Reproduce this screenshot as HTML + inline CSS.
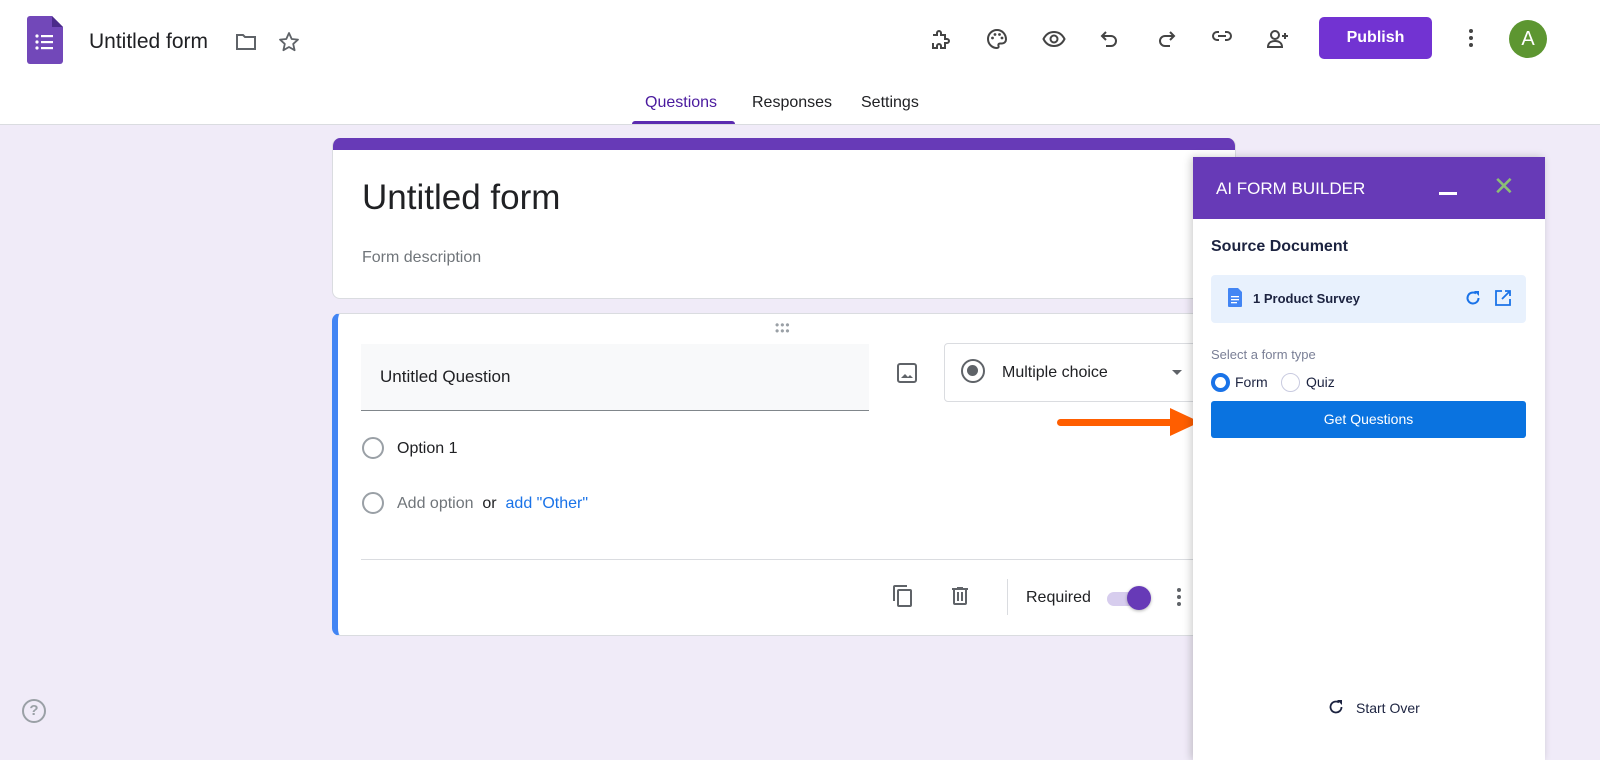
<!DOCTYPE html>
<html><head><meta charset="utf-8"><style>
*{box-sizing:border-box;margin:0;padding:0}
body{width:1600px;height:760px;overflow:hidden;background:#f0ebf8;font-family:"Liberation Sans",Arial,sans-serif;position:relative;color:#202124}
.abs{position:absolute}
.top{left:0;top:0;width:1600px;height:125px;background:#fff;border-bottom:1px solid #dadce0}
.ic{position:absolute;width:24px;height:24px}
.card{background:#fff;border-radius:8px;border:1px solid #dadce0;position:absolute}
.radio{position:absolute;width:22px;height:22px;border:2px solid #9aa0a6;border-radius:50%}
</style></head><body>
<div class="abs top">
 <svg class="abs" style="left:27px;top:16px" width="36" height="48" viewBox="0 0 36 48"><path d="M3 0h22l11 11v34a3 3 0 0 1-3 3H3a3 3 0 0 1-3-3V3a3 3 0 0 1 3-3z" fill="#7248b9"/><path d="M25 0l11 11H25z" fill="#4b2b8a"/><g fill="#fff"><circle cx="10" cy="20" r="1.6"/><circle cx="10" cy="26" r="1.6"/><circle cx="10" cy="32" r="1.6"/><rect x="14" y="19" width="12" height="2.2"/><rect x="14" y="25" width="12" height="2.2"/><rect x="14" y="31" width="12" height="2.2"/></g></svg>
 <div class="abs" style="left:89px;top:30px;font-size:21px">Untitled form</div>
 <svg class="ic" style="left:234px;top:30px" viewBox="0 0 24 24"><path d="M3 5h6l2 2h10v12H3z" fill="none" stroke="#5f6368" stroke-width="2"/></svg>
 <svg class="ic" style="left:277px;top:30px" viewBox="0 0 24 24"><path d="M12 3l2.7 6 6.3.6-4.8 4.3 1.4 6.3L12 17l-5.6 3.2 1.4-6.3L3 9.6 9.3 9z" fill="none" stroke="#5f6368" stroke-width="1.8" stroke-linejoin="round"/></svg>
 <svg class="ic" style="left:929px;top:27px" viewBox="0 0 24 24"><path d="M4 8h4V6a2 2 0 0 1 4 0v2h4v4h2a2 2 0 0 1 0 4h-2v5h-4v-2a2 2 0 0 0-4 0v2H4v-5" fill="none" stroke="#444" stroke-width="2"/></svg>
 <svg class="ic" style="left:985px;top:27px" viewBox="0 0 24 24"><path d="M12 3a9 9 0 0 0 0 18c1.5 0 2-1 1.5-2s0-2.5 1.5-2.5H17a4 4 0 0 0 4-4C21 7 17 3 12 3z" fill="none" stroke="#444" stroke-width="2"/><circle cx="7.5" cy="11" r="1.4" fill="#444"/><circle cx="10" cy="7.5" r="1.4" fill="#444"/><circle cx="14.5" cy="7.5" r="1.4" fill="#444"/><circle cx="17" cy="11" r="1.4" fill="#444"/></svg>
 <svg class="ic" style="left:1042px;top:27px" viewBox="0 0 24 24"><path d="M1.5 12C4 7 8 5 12 5s8 2 10.5 7C20 17 16 19 12 19s-8-2-10.5-7z" fill="none" stroke="#444" stroke-width="2"/><circle cx="12" cy="12" r="3.5" fill="none" stroke="#444" stroke-width="2"/></svg>
 <svg class="ic" style="left:1098px;top:27px" viewBox="0 0 24 24"><path d="M8 5L4 9l4 4M4 9h9a5 5 0 0 1 0 10H8" fill="none" stroke="#444" stroke-width="2"/></svg>
 <svg class="ic" style="left:1154px;top:27px" viewBox="0 0 24 24"><path d="M16 5l4 4-4 4M20 9h-9a5 5 0 0 0 0 10h5" fill="none" stroke="#444" stroke-width="2"/></svg>
 <svg class="ic" style="left:1210px;top:24px" viewBox="0 0 24 24"><path d="M9 8H7a4 4 0 0 0 0 8h2M15 8h2a4 4 0 0 1 0 8h-2M8 12h8" fill="none" stroke="#444" stroke-width="2"/></svg>
 <svg class="ic" style="left:1266px;top:27px" viewBox="0 0 24 24"><circle cx="9" cy="8" r="4" fill="none" stroke="#444" stroke-width="2"/><path d="M2 20c0-4 3-6 7-6s7 2 7 6z" fill="none" stroke="#444" stroke-width="2"/><path d="M19 6v6M16 9h6" stroke="#444" stroke-width="2"/></svg>
 <div class="abs" style="left:1319px;top:17px;width:113px;height:42px;background:#7233d2;border-radius:5px;color:#fff;font-weight:bold;font-size:16px;text-align:center;line-height:42px">Publish</div>
 <svg class="ic" style="left:1459px;top:26px" viewBox="0 0 24 24"><g fill="#444"><circle cx="12" cy="5" r="2"/><circle cx="12" cy="12" r="2"/><circle cx="12" cy="19" r="2"/></g></svg>
 <div class="abs" style="left:1509px;top:20px;width:38px;height:38px;border-radius:50%;background:#5d9631;color:#fff;font-size:20px;text-align:center;line-height:38px">A</div>
 <div class="abs" style="left:645px;top:94px;font-size:16px;color:#4a1a9e">Questions</div>
 <div class="abs" style="left:632px;top:121px;width:103px;height:3px;background:#5b2bb0;border-radius:3px 3px 0 0"></div>
 <div class="abs" style="left:752px;top:94px;font-size:16px">Responses</div>
 <div class="abs" style="left:861px;top:94px;font-size:16px">Settings</div>
</div>
<div class="card" style="left:332px;top:138px;width:904px;height:161px;border-top:none;overflow:hidden">
 <div style="height:12px;background:#673ab7"></div>
 <div class="abs" style="left:29px;top:40px;font-size:35px">Untitled form</div>
 <div class="abs" style="left:29px;top:111px;font-size:16px;color:#70757a">Form description</div>
</div>
<div class="card" style="left:332px;top:313px;width:904px;height:323px;border-left:6px solid #4285f4;overflow:hidden">
 <div class="abs" style="left:437px;top:8px;color:#9aa0a6;font-size:12px;letter-spacing:1px;line-height:6px">•••<br>•••</div>
 <div class="abs" style="left:23px;top:30px;width:508px;height:67px;background:#f8f9fa;border-bottom:1px solid #80868b"></div>
 <div class="abs" style="left:42px;top:53px;font-size:17px">Untitled Question</div>
 <svg class="ic" style="left:557px;top:47px" viewBox="0 0 24 24"><rect x="3" y="3" width="18" height="18" rx="2" fill="none" stroke="#5f6368" stroke-width="2"/><path d="M6 17l4-4 3 3 2-2 3 3z" fill="#5f6368"/></svg>
 <div class="abs" style="left:606px;top:29px;width:300px;height:59px;border:1px solid #dadce0;border-radius:4px"></div>
 <div class="abs" style="left:623px;top:45px;width:24px;height:24px;border:2.5px solid #5f6368;border-radius:50%"><div style="margin:4px;width:11px;height:11px;border-radius:50%;background:#5f6368"></div></div>
 <div class="abs" style="left:664px;top:50px;font-size:16px">Multiple choice</div>
 <div class="abs" style="left:834px;top:56px;border:5px solid transparent;border-top-color:#5f6368"></div>
 <div class="radio" style="left:24px;top:123px"></div>
 <div class="abs" style="left:59px;top:126px;font-size:16px">Option 1</div>
 <div class="radio" style="left:24px;top:178px"></div>
 <div class="abs" style="left:59px;top:181px;font-size:16px;color:#70757a">Add option <span style="color:#202124">&nbsp;or&nbsp;</span> <span style="color:#1a73e8">add "Other"</span></div>
 <div class="abs" style="left:23px;top:245px;width:880px;height:1px;background:#dadce0"></div>
 <svg class="ic" style="left:553px;top:270px" viewBox="0 0 24 24"><path d="M16 1H4a2 2 0 0 0-2 2v14h2V3h12zm3 4H8a2 2 0 0 0-2 2v14a2 2 0 0 0 2 2h11a2 2 0 0 0 2-2V7a2 2 0 0 0-2-2zm0 16H8V7h11z" fill="#5f6368"/></svg>
 <svg class="ic" style="left:610px;top:270px" viewBox="0 0 24 24"><path d="M15 4V3H9v1H4v2h1v13a2 2 0 0 0 2 2h10a2 2 0 0 0 2-2V6h1V4zm2 15H7V6h10zM9 8h2v9H9zm4 0h2v9h-2z" fill="#5f6368"/></svg>
 <div class="abs" style="left:669px;top:265px;width:1px;height:36px;background:#dadce0"></div>
 <div class="abs" style="left:688px;top:275px;font-size:16px">Required</div>
 <div class="abs" style="left:769px;top:278px;width:36px;height:14px;border-radius:7px;background:#d7cdee"></div>
 <div class="abs" style="left:789px;top:272px;width:24px;height:24px;border-radius:50%;background:#673ab7;box-shadow:0 1px 3px rgba(0,0,0,.3)"></div>
 <svg class="ic" style="left:829px;top:271px" viewBox="0 0 24 24"><g fill="#5f6368"><circle cx="12" cy="5" r="2"/><circle cx="12" cy="12" r="2"/><circle cx="12" cy="19" r="2"/></g></svg>
</div>
<div class="abs" style="left:1057px;top:419px;width:118px;height:7px;background:#ff5e00;border-radius:4px"></div>
<div class="abs" style="left:1170px;top:408px;border-left:30px solid #ff5e00;border-top:14px solid transparent;border-bottom:14px solid transparent"></div>
<div class="abs" style="left:22px;top:699px;width:24px;height:24px;border:2px solid #9aa0a6;border-radius:50%;color:#9aa0a6;font-size:15px;text-align:center;line-height:20px;font-weight:bold">?</div>
<div class="abs" style="left:1193px;top:157px;width:352px;height:603px;background:#fff;box-shadow:-2px 0 8px rgba(0,0,0,.2)">
 <div style="height:62px;background:#673ab7;position:relative">
  <div class="abs" style="left:23px;top:22px;color:#fff;font-size:17px">AI FORM BUILDER</div>
  <div class="abs" style="left:246px;top:35px;width:18px;height:2.5px;background:#fff"></div>
  <div class="abs" style="left:300px;top:14px;color:#8cbf75;font-size:26px">✕</div>
 </div>
 <div class="abs" style="left:18px;top:81px;font-size:16px;font-weight:bold;color:#1c2340">Source Document</div>
 <div class="abs" style="left:18px;top:118px;width:315px;height:48px;background:#e8f1fd;border-radius:4px">
  <svg class="abs" style="left:17px;top:13px" width="14" height="19" viewBox="0 0 14 19"><path d="M1 0h9l4 4v14a1 1 0 0 1-1 1H1a1 1 0 0 1-1-1V1a1 1 0 0 1 1-1z" fill="#4285f4"/><g fill="#fff"><rect x="3" y="8" width="8" height="1.3"/><rect x="3" y="11" width="8" height="1.3"/><rect x="3" y="14" width="6" height="1.3"/></g></svg>
  <div class="abs" style="left:42px;top:16px;font-size:13px;font-weight:bold;color:#1c2340">1 Product Survey</div>
  <svg class="abs" style="left:253px;top:14px" width="18" height="18" viewBox="0 0 18 18"><path d="M14.5 9A5.5 5.5 0 1 1 12 4.4" fill="none" stroke="#1a73e8" stroke-width="2"/><path d="M10 2h5v5z" fill="#1a73e8"/></svg>
  <svg class="abs" style="left:283px;top:14px" width="18" height="18" viewBox="0 0 18 18"><path d="M8 2H2v14h14v-6M11 2h5v5M16 2L8 10" fill="none" stroke="#1a73e8" stroke-width="1.8"/></svg>
 </div>
 <div class="abs" style="left:18px;top:190px;font-size:13px;color:#7a7f96">Select a form type</div>
 <div class="abs" style="left:18px;top:216px;width:19px;height:19px;border:4.5px solid #1a73e8;border-radius:50%"></div>
 <div class="abs" style="left:42px;top:217px;font-size:14px;color:#1c2340">Form</div>
 <div class="abs" style="left:88px;top:216px;width:19px;height:19px;border:1.5px solid #c9cbe0;border-radius:50%"></div>
 <div class="abs" style="left:113px;top:217px;font-size:14px;color:#1c2340">Quiz</div>
 <div class="abs" style="left:18px;top:244px;width:315px;height:37px;background:#0a73e0;border-radius:3px;color:#fff;font-size:14px;text-align:center;line-height:37px">Get Questions</div>
 <svg class="abs" style="left:134px;top:541px" width="18" height="18" viewBox="0 0 18 18"><path d="M14.5 9A5.5 5.5 0 1 1 12 4.4" fill="none" stroke="#1c2340" stroke-width="1.8"/><path d="M10 2h5v5z" fill="#1c2340"/></svg>
 <div class="abs" style="left:163px;top:543px;font-size:14px;color:#1c2340">Start Over</div>
</div>
</body></html>
